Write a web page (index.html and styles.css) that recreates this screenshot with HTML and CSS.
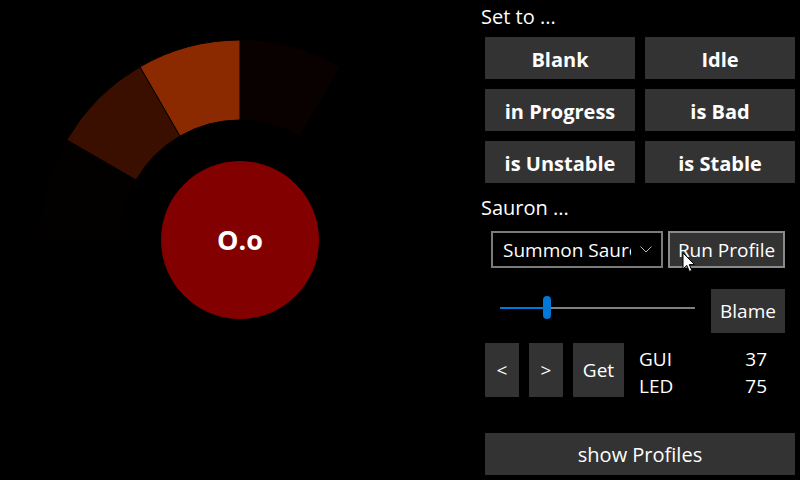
FILE: index.html
```html
<!DOCTYPE html>
<html>
<head>
<meta charset="utf-8">
<link rel="stylesheet" href="styles.css">
</head>
<body>
<div class="app">
  <div class="chart">
    <svg class="ring" width="480" height="480" viewBox="0 0 480 480">
      <path d="M40 240 A200 200 0 0 1 66.79 140 L136.08 180 A120 120 0 0 0 120 240 Z" fill="#030000"/>
      <path d="M66.79 140 A200 200 0 0 1 140 66.79 L180 136.08 A120 120 0 0 0 136.08 180 Z" fill="#3b0f00" stroke="#000" stroke-width="1"/>
      <path d="M140 66.79 A200 200 0 0 1 240 40 L240 120 A120 120 0 0 0 180 136.08 Z" fill="#8b2a00" stroke="#000" stroke-width="1"/>
      <path d="M240 40 A200 200 0 0 1 340 66.79 L300 136.08 A120 120 0 0 0 240 120 Z" fill="#090000"/>
      <circle cx="240" cy="240" r="79" fill="#830000"/>
    </svg>
    <div class="face">O.o</div>
  </div>
  <div class="panel">
    <div class="label first">Set to ...</div>
    <div class="grid">
      <button class="btn bold">Blank</button>
      <button class="btn bold">Idle</button>
      <button class="btn bold">in Progress</button>
      <button class="btn bold">is Bad</button>
      <button class="btn bold">is Unstable</button>
      <button class="btn bold">is Stable</button>
    </div>
    <div class="label second">Sauron ...</div>
    <div class="row combo-row">
      <div class="combo">
        <span class="combo-text">Summon Sauron</span>
        <svg class="chev" width="12" height="7" viewBox="0 0 12 7"><path d="M0.5 0.5 L6 6 L11.5 0.5" fill="none" stroke="#bbb" stroke-width="1"/></svg>
      </div>
      <button class="btn run">Run Profile</button>
      <svg class="cursor" width="14" height="21" viewBox="0 0 14 21"><path d="M1 1 L1 17 L4.8 13.4 L7.4 19.4 L9.8 18.4 L7.3 12.6 L12.6 12.6 Z" fill="#fff" stroke="#000" stroke-width="1"/></svg>
    </div>
    <div class="row slider-row">
      <div class="slider">
        <div class="fill" style="width:43px"></div>
        <div class="thumb"></div>
        <div class="rest"></div>
      </div>
      <button class="btn blame">Blame</button>
    </div>
    <div class="row nav-row">
      <button class="btn small">&lt;</button>
      <button class="btn small">&gt;</button>
      <button class="btn get">Get</button>
      <div class="stats">
        <div class="stat"><span>GUI</span><span>37</span></div>
        <div class="stat"><span>LED</span><span>75</span></div>
      </div>
    </div>
    <button class="btn wide">show Profiles</button>
  </div>
</div>
</body>
</html>
```
FILE: styles.css
```css
html, body {
  margin: 0;
  padding: 0;
  background: #000;
}
body {
  width: 800px;
  height: 480px;
  overflow: hidden;
  font-family: "Open Sans", "Noto Sans", sans-serif;
  color: #fff;
}
.app {
  display: flex;
  width: 800px;
  height: 480px;
}
.chart {
  position: relative;
  width: 480px;
  height: 480px;
  flex: none;
}
.ring {
  display: block;
}
.face {
  position: absolute;
  left: 160px;
  top: 221px;
  width: 160px;
  text-align: center;
  font-size: 27px;
  font-weight: 700;
  line-height: 38px;
}
.panel {
  width: 320px;
  flex: none;
  display: flex;
  flex-direction: column;
  padding-left: 5px;
  box-sizing: border-box;
}
.label {
  font-size: 20px;
  line-height: 28px;
  margin-left: -4px;
}
.label.first {
  height: 37px;
  padding-top: 3px;
  box-sizing: border-box;
}
.label.second {
  height: 48px;
  padding-top: 11px;
  box-sizing: border-box;
}
.grid {
  display: grid;
  grid-template-columns: 150px 150px;
  grid-auto-rows: 42px;
  column-gap: 10px;
  row-gap: 10px;
}
.btn {
  background: #333;
  color: #fff;
  border: none;
  margin: 0;
  padding: 0;
  font-family: inherit;
  font-size: 19px;
  cursor: default;
  display: flex;
  align-items: center;
  justify-content: center;
}
.btn.bold {
  font-weight: 700;
  font-size: 20px;
  padding-top: 2px;
}
.row {
  display: flex;
  position: relative;
}
.combo-row {
  height: 37px;
  gap: 5px;
  margin-left: 6px;
}
.combo {
  width: 172px;
  height: 37px;
  box-sizing: border-box;
  border: 2px solid #7a7a7a;
  display: flex;
  align-items: center;
  padding-left: 10px;
  padding-right: 9px;
  overflow: hidden;
}
.combo-text {
  font-size: 19px;
  white-space: nowrap;
  overflow: hidden;
  width: 128px;
  flex: none;
}
.chev {
  margin-left: auto;
  flex: none;
}
.btn.run {
  width: 117px;
  height: 37px;
  box-sizing: border-box;
  border: 2px solid #8a8a8a;
}
.cursor {
  position: absolute;
  left: 191px;
  top: 21px;
}
.slider-row {
  margin-top: 21px;
  height: 44px;
}
.slider {
  margin-left: 15px;
  margin-top: 7px;
  width: 195px;
  height: 23px;
  display: flex;
  align-items: center;
}
.fill {
  height: 2px;
  background: #0078d7;
  flex: none;
}
.thumb {
  width: 8px;
  height: 23px;
  border-radius: 4px;
  background: #0078d7;
  flex: none;
}
.rest {
  flex: 1;
  height: 2px;
  background: #7f7f7f;
}
.btn.blame {
  margin-left: 16px;
  width: 74px;
  height: 44px;
}
.nav-row {
  margin-top: 10px;
  height: 54px;
  gap: 10px;
}
.btn.small {
  width: 34px;
  height: 54px;
}
.btn.get {
  width: 51px;
  height: 54px;
}
.stats {
  margin-left: 5px;
  width: 128px;
  padding-top: 3px;
  font-size: 19px;
  line-height: 27px;
}
.stat {
  display: flex;
  justify-content: space-between;
}
.btn.wide {
  margin-top: 36px;
  width: 310px;
  height: 42px;
  font-size: 20px;
}
```
